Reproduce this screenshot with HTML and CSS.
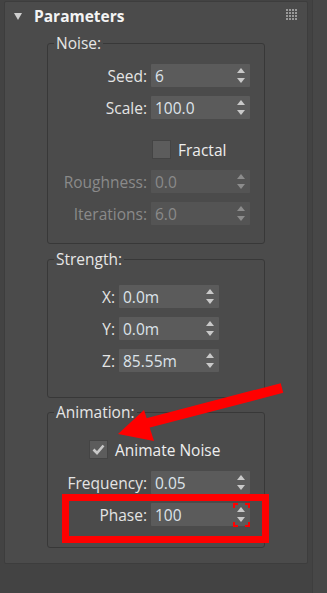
FILE: index.html
```html
<!DOCTYPE html>
<html lang="en">
<head>
    <meta charset="UTF-8">
    <title>Noise Modifier / Parameters</title>
    <meta name="viewport" content="width=device-width, initial-scale=1.0">
    <link rel="stylesheet" href="styles.css">
</head>
<body>

<div class="app">
    <div class="panel">
        <div class="rollout-head">
            <span class="caret"></span>
            <span class="title">Parameters</span>
            <svg class="grip" width="11" height="11" viewBox="0 0 11 11">
                <g fill="#9a9a9a">
                    <rect x="0" y="0" width="2" height="2"/><rect x="3" y="0" width="2" height="2"/><rect x="6" y="0" width="2" height="2"/><rect x="9" y="0" width="2" height="2"/>
                    <rect x="0" y="3" width="2" height="2"/><rect x="3" y="3" width="2" height="2"/><rect x="6" y="3" width="2" height="2"/><rect x="9" y="3" width="2" height="2"/>
                    <rect x="0" y="6" width="2" height="2"/><rect x="3" y="6" width="2" height="2"/><rect x="6" y="6" width="2" height="2"/><rect x="9" y="6" width="2" height="2"/>
                    <rect x="0" y="9" width="2" height="2"/><rect x="3" y="9" width="2" height="2"/><rect x="6" y="9" width="2" height="2"/><rect x="9" y="9" width="2" height="2"/>
                </g>
            </svg>
        </div>

        <fieldset class="group noise">
            <legend>Noise:</legend>
            <div class="row"><label>Seed:</label><div class="spinner"><span class="value">6</span><svg class="arrows" width="8" height="15" viewBox="0 0 8 15"><polygon points="0,5 4,0 8,5"/><polygon points="0,10 4,15 8,10"/></svg></div></div>
            <div class="row"><label>Scale:</label><div class="spinner"><span class="value">100.0</span><svg class="arrows" width="8" height="15" viewBox="0 0 8 15"><polygon points="0,5 4,0 8,5"/><polygon points="0,10 4,15 8,10"/></svg></div></div>
            <div class="check-row fractal"><span class="check"></span><span class="check-label">Fractal</span></div>
            <div class="row disabled"><label>Roughness:</label><div class="spinner"><span class="value">0.0</span><svg class="arrows" width="8" height="15" viewBox="0 0 8 15"><polygon points="0,5 4,0 8,5"/><polygon points="0,10 4,15 8,10"/></svg></div></div>
            <div class="row disabled"><label>Iterations:</label><div class="spinner"><span class="value">6.0</span><svg class="arrows" width="8" height="15" viewBox="0 0 8 15"><polygon points="0,5 4,0 8,5"/><polygon points="0,10 4,15 8,10"/></svg></div></div>
        </fieldset>

        <fieldset class="group strength">
            <legend>Strength:</legend>
            <div class="row"><label>X:</label><div class="spinner"><span class="value">0.0m</span><svg class="arrows" width="8" height="15" viewBox="0 0 8 15"><polygon points="0,5 4,0 8,5"/><polygon points="0,10 4,15 8,10"/></svg></div></div>
            <div class="row"><label>Y:</label><div class="spinner"><span class="value">0.0m</span><svg class="arrows" width="8" height="15" viewBox="0 0 8 15"><polygon points="0,5 4,0 8,5"/><polygon points="0,10 4,15 8,10"/></svg></div></div>
            <div class="row"><label>Z:</label><div class="spinner"><span class="value">85.55m</span><svg class="arrows" width="8" height="15" viewBox="0 0 8 15"><polygon points="0,5 4,0 8,5"/><polygon points="0,10 4,15 8,10"/></svg></div></div>
        </fieldset>

        <fieldset class="group animation">
            <legend>Animation:</legend>
            <div class="check-row animate"><span class="check checked"><svg width="13" height="11" viewBox="0 0 13 11"><polyline points="1.5,5.5 5,9 11.5,1.5" fill="none" stroke="#c8c8c8" stroke-width="2.6"/></svg></span><span class="check-label">Animate Noise</span></div>
            <div class="row freq"><label>Frequency:</label><div class="spinner"><span class="value">0.05</span><svg class="arrows" width="8" height="15" viewBox="0 0 8 15"><polygon points="0,5 4,0 8,5"/><polygon points="0,10 4,15 8,10"/></svg></div></div>
            <div class="row"><label>Phase:</label><div class="spinner"><span class="value">100</span><svg class="arrows" width="8" height="15" viewBox="0 0 8 15"><polygon points="0,5 4,0 8,5"/><polygon points="0,10 4,15 8,10"/></svg></div></div>
        </fieldset>
    </div>
    <div class="scroll-strip"></div>

    <!-- annotation drawn over the screenshot -->
    <svg class="markup" width="327" height="593" viewBox="0 0 327 593">
        <line x1="282" y1="388" x2="140" y2="425" stroke="#ff0000" stroke-width="10"/>
        <polygon points="118,434 144,410 154,441" fill="#ff0000"/>
        <rect x="65.5" y="497.5" width="200" height="42" fill="none" stroke="#ff0000" stroke-width="7"/>
        <g fill="none" stroke="#ff0000" stroke-width="2">
            <polyline points="234,508 234,504 238,504"/>
            <polyline points="245,504 249,504 249,508"/>
            <polyline points="234,522 234,526 238,526"/>
            <polyline points="245,526 249,526 249,522"/>
        </g>
    </svg>
</div>

</body>
</html>
```

FILE: styles.css
```css
body {
    margin: 0;
    background-color: #434343;
    font-family: "Open Sans", "Noto Sans", sans-serif;
    font-size: 15.5px;
    color: #e2e2e2;
}
.app {
    position: relative;
    width: 327px;
    height: 593px;
    display: flex;
    align-items: flex-start;
    overflow: hidden;
}
.panel {
    width: 303px;
    margin-left: 4px;
    margin-top: 1px;
    background-color: #4b4b4b;
    border: 1px solid #3d3d3d;
    border-radius: 2px;
    padding-bottom: 15px;
}
.scroll-strip {
    width: 14px;
    height: 593px;
    margin-left: 4px;
    background-color: #474747;
    border-left: 1px solid #3e3e3e;
}
.rollout-head {
    height: 28px;
    display: flex;
    align-items: center;
    position: relative;
}
.caret {
    width: 0;
    height: 0;
    margin-left: 9px;
    margin-right: 12px;
    border-left: 4px solid transparent;
    border-right: 4px solid transparent;
    border-top: 7px solid #cfcfcf;
}
.title {
    font-weight: bold;
    font-size: 15.5px;
    color: #f4f4f4;
}
.grip {
    margin-left: auto;
    margin-right: 10px;
    margin-top: -3px;
}
.group {
    margin: 5px 0 0 42px;
    width: 218px;
    padding: 0 0 18px 0;
    border: 1px solid #383838;
    border-radius: 3px;
    box-sizing: border-box;
}
.group legend {
    margin-left: 6px;
    padding: 0 2px;
    line-height: 16px;
    color: #e6e6e6;
}
.strength {
    margin-top: 7px;
    padding-bottom: 25px;
}
.animation {
    margin-top: 6px;
    padding-bottom: 21px;
}
.row {
    display: flex;
    align-items: center;
    height: 23px;
    margin-top: 9px;
}
.row label {
    width: 99px;
    margin-right: 4px;
    text-align: right;
    color: #e4e4e4;
}
.strength .row label {
    width: 67px;
}
.noise .row:first-of-type {
    margin-top: 13px;
}
.strength .row:first-of-type {
    margin-top: 18px;
}
.animation .freq {
    margin-top: 10px;
}
.spinner {
    width: 99px;
    height: 23px;
    background-color: #5b5b5b;
    border-radius: 1px;
    display: flex;
    align-items: center;
    box-sizing: border-box;
    padding: 0 5px 0 4px;
}
.strength .spinner {
    width: 100px;
}
.value {
    flex: 1;
    color: #dde3ea;
}
.arrows {
    fill: #c9c9c9;
}
.disabled label,
.disabled .value {
    color: #8a8a8a;
}
.disabled .spinner {
    background-color: #545454;
}
.disabled .arrows {
    fill: #8c8c8c;
}
.check-row {
    display: flex;
    align-items: center;
    height: 23px;
}
.fractal {
    margin-top: 19px;
    margin-bottom: 1px;
    padding-left: 104px;
}
.animate {
    margin-top: 18px;
    margin-bottom: 1px;
    padding-left: 41px;
}
.check {
    width: 19px;
    height: 19px;
    box-sizing: border-box;
    background-color: #5c5c5c;
    border: 1px solid #444444;
    display: flex;
    align-items: center;
    justify-content: center;
    margin-right: 7px;
}
.check-label {
    color: #eeeeee;
}
.markup {
    position: absolute;
    left: 0;
    top: 0;
    pointer-events: none;
}
```
